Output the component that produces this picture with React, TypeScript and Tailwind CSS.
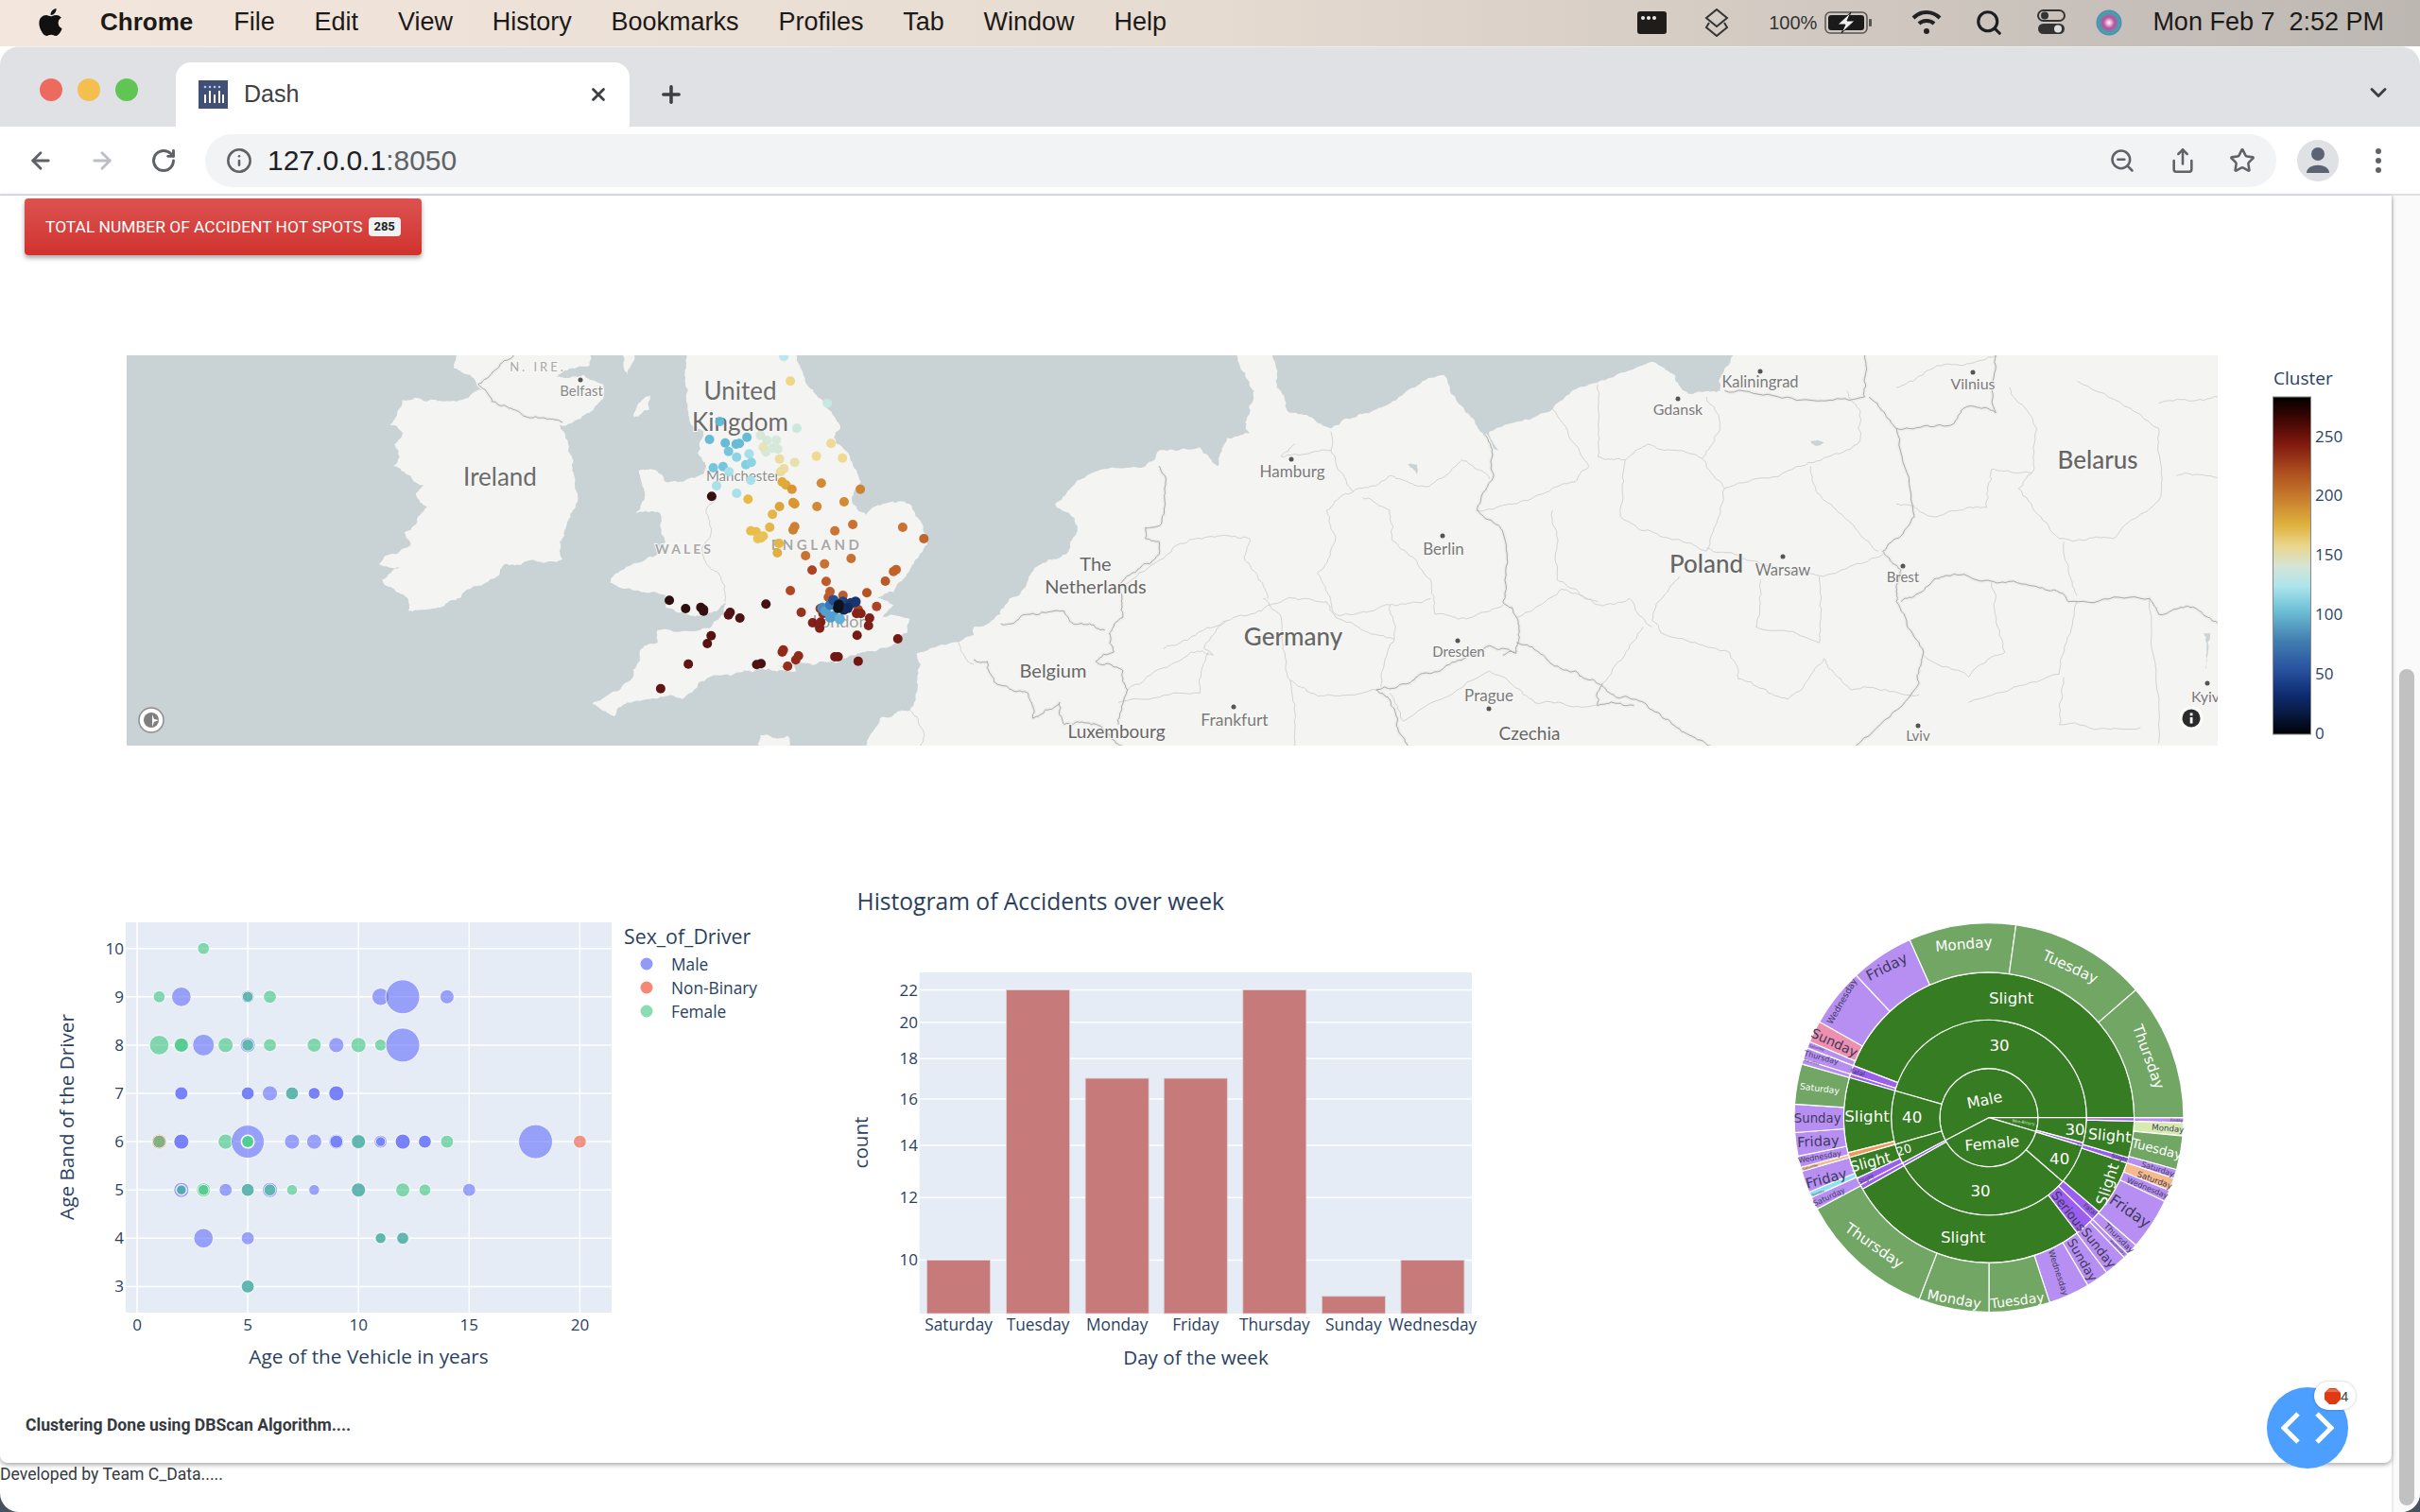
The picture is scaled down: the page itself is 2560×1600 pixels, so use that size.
import React from "react";
import { ArrowLeft, ArrowRight, RotateCw, Info, ZoomOut, Share, Star, X, Plus, ChevronDown, Search } from "lucide-react";
import { FaApple } from "react-icons/fa";

type P = number[];
const z3 = (x: number, y: number) => [130 + x / 1.742, 370 + y / 3];
const z4 = (x: number, y: number) => [1030 + x / 1.045, 370 + y / 3];
const hash = (a: number, b: number) => {
  const v = Math.sin(a * 12.9898 + b * 78.233) * 43758.5453;
  return (v - Math.floor(v)) * 2 - 1;
};
const roughSeg = (x0: number, y0: number, x1: number, y1: number, depth: number, out: number[][]) => {
  const dx = x1 - x0, dy = y1 - y0;
  const len = Math.hypot(dx, dy);
  if (depth === 0 || len < 3) {
    out.push([x1, y1]);
    return;
  }
  const amp = Math.min(len * 0.16, depth === 4 ? 3.6 : depth === 3 ? 2.4 : 1.5);
  const n = hash(x0 + x1, y0 + y1) * amp;
  const mx = (x0 + x1) / 2 - (dy / len) * n;
  const my = (y0 + y1) / 2 + (dx / len) * n;
  roughSeg(x0, y0, mx, my, depth - 1, out);
  roughSeg(mx, my, x1, y1, depth - 1, out);
};
const roughPts = (pts: number[][], depth = 4) => {
  const out: number[][] = [pts[0]];
  for (let i = 1; i < pts.length; i++) roughSeg(pts[i - 1][0], pts[i - 1][1], pts[i][0], pts[i][1], depth, out);
  return out;
};
const pairs = (pts: P, f: (x: number, y: number) => number[]) => {
  const o: number[][] = [];
  for (let i = 0; i < pts.length; i += 2) o.push(f(pts[i], pts[i + 1]));
  return o;
};
const line = (pp: number[][]) => pp.map((p, i) => (i === 0 ? "M" : "L") + p[0].toFixed(1) + " " + p[1].toFixed(1)).join(" ");
const toPath = (pts: P, f: (x: number, y: number) => number[], close = true) => {
  const pp = pairs(pts, f);
  if (close) pp.push(pp[0]);
  return line(roughPts(pp)) + (close ? " Z" : "");
};

const ireland: P = [630,-40,610,60,640,80,665,125,625,160,560,165,515,160,505,210,492,240,515,262,500,300,510,340,498,370,530,400,555,430,540,460,560,500,540,555,518,580,530,620,490,650,472,680,510,690,478,730,500,760,525,790,525,830,560,825,600,800,640,760,690,720,705,680,760,670,810,665,805,610,825,520,838,480,830,350,815,280,805,240,825,235,860,200,882,160,885,110,850,80,800,85,790,90,860,50,855,-40];
const gb: P = [1040,-40,1220,-40,1260,110,1300,190,1322,250,1310,280,1340,340,1360,420,1345,490,1370,525,1400,490,1450,490,1475,560,1482,620,1450,700,1420,770,1390,790,1420,810,1400,850,1450,855,1445,900,1420,935,1350,970,1290,990,1235,998,1240,1022,1205,1022,1190,1012,1130,1025,1080,1040,1060,1060,1030,1110,1000,1100,930,1120,905,1165,880,1140,865,1125,900,1090,940,1040,955,950,985,930,985,890,1080,885,1108,840,1112,805,1070,842,1040,840,1000,820,1000,780,960,770,898,740,920,700,985,650,1000,610,990,520,945,520,960,440,950,385,975,380,1000,420,1070,395,1075,370,1060,330,1070,260,1045,230,1040,170,1035,80];
const scot: P = [905,-40,960,-40,930,80];
const man: P = [942,215,950,170,972,145,970,190];
const contA: P = [1340,1330,1395,1170,1450,1145,1470,1000,1462,965,1568,905];
const contB: P = [0,880,20,860,35,810,55,760,75,680,105,640,115,560,90,490,125,400,190,370,205,320,250,310,270,370,280,280,305,265,300,230,310,130,295,60,285,-40,325,-40,335,120,350,200,395,250,430,205,470,150,520,80,540,180,560,260,580,320,570,260,640,190,680,110,750,38,775,80,790,140,825,130,830,60,843,-40,1600,-40,1600,1330];
const contPath = (() => {
  const pp = [...pairs(contA, z3), ...pairs(contB, z4)];
  pp.push(pp[0]);
  return line(roughPts(pp)) + " Z";
})();

const natBorders: P[] = [
  [205,370,212,430,205,560,190,565,190,600,205,610,205,650,185,690,160,760,165,850,150,900,155,960,135,990,165,1020,170,1080,160,1190],
  [0,985,15,990,25,1060,60,1090,65,1170,95,1120,100,1190,140,1195,165,1258],
  [30,870,60,840,100,830,110,870,145,890],
  [565,270,575,400,557,510,585,580,585,800,600,850,600,960,585,970],
  [445,1080,480,1060,520,1010,570,940,600,965],
  [600,930,640,1000,665,1020,690,1060,700,1085,730,1110,770,1180,815,1258],
  [990,150,1020,250,1040,530,1005,640,1025,700,1020,800,1050,960,1045,1060,975,1258],
  [830,130,915,160,985,150],
  [1020,250,1080,240,1100,180,1130,200,1130,18],
  [1025,800,1060,735,1100,720,1150,735,1200,770,1210,800,1300,790,1310,840,1350,820,1376,870],
  [445,1080,465,1140,480,1258],
  [695,1060,690,1130,730,1130],
  [985,18,985,150],
];
const regBorders: P[] = [
  [390,510,400,600,380,710,395,800,400,840,460,810,505,790],
  [430,470,460,510,465,610,505,730,510,840,545,855,585,810],
  [420,450,390,510],
  [460,810,465,920,450,1070],
  [280,860,340,800,390,800,400,850,465,920],
  [320,790,340,850,350,1050,380,1100,445,1080],
  [160,770,225,620,280,590,305,600,300,670,320,750,325,790],
  [210,950,280,860,255,950,265,970,240,960,170,1080],
  [355,300,340,340,395,320,395,260],
  [395,320,420,450,460,400,500,435,540,350,570,410],
  [640,190,680,370,665,420,600,490,555,510],
  [690,110,690,340,720,350,745,300,805,345,825,250,810,150],
  [720,350,715,530,770,600,810,640,830,440,805,345],
  [830,440,915,370,980,290,980,200,965,130],
  [925,370,935,460,965,540,1000,640],
  [810,630,870,680,940,720,1005,650],
  [640,510,645,730,690,810,725,790,750,880],
  [780,720,750,860,760,900,835,960,845,1045,900,1110,940,980],
  [870,730,865,880,935,930,935,720],
  [600,850,650,760,690,800],
  [740,880,695,1060],
  [940,980,970,1080,1045,1095],
  [1020,490,1060,530,1120,500,1125,380,1170,390,1155,440,1200,600,1260,600,1310,480,1310,250,1220,100],
  [1205,610,1220,780],
  [1330,400,1376,410],
  [1050,970,1100,1040,1140,960,1125,740],
  [1100,1120,1200,1030,1220,800],
  [1300,790,1310,1250],
  [1205,1040,1200,1190,1290,1200],
  [460,1090,475,1180,570,1020,620,1120],
  [620,1120,690,1130],
  [1020,120,1065,50,1130,20],
  [260,960,250,1090,160,1120],
  [350,1050,355,1258],
  [1145,120,1175,250,1170,390],
  [1310,170,1376,150],
];

const mapDots: [number, number, string][] = [
  [1218,22,"#b9e7ea"],[1230,100,"#f0d67f"],[1298,170,"#c7e9e6"],[1100,228,"#5fb9d6"],[1242,250,"#c8e8e0"],[1081,285,"#5fb9d6"],[1110,296,"#5fb9d6"],[1150,278,"#5fb9d6"],[1130,300,"#5fb9d6"],[1136,298,"#5fb9d6"],[1116,323,"#6fc3dc"],[1131,341,"#86d3e4"],[1154,331,"#9ddfe9"],[1148,365,"#7ccee0"],[1158,358,"#86d3e4"],[1088,375,"#6fc3dc"],[1106,371,"#6fc3dc"],[1117,388,"#a5e0ea"],[1094,432,"#a5e0ea"],[1157,415,"#a5e0ea"],[1131,456,"#a5e0ea"],
  [1175,272,"#d5e8d8"],[1187,288,"#d5e8d8"],[1204,287,"#d5e8d8"],[1185,325,"#d5e8d8"],[1197,313,"#d5e8d8"],[1207,316,"#d5e8d8"],[1180,310,"#e5e4b8"],
  [1305,298,"#eed98e"],[1278,338,"#eed98e"],[1326,344,"#eed98e"],[1210,347,"#ecdb9c"],[1238,358,"#e8dfa8"],[1218,378,"#ecdb9c"],[1212,388,"#ecdb9c"],
  [1085,466,"#2a0404"],
  [1215,420,"#dfa52f"],[1222,430,"#dfa52f"],[1233,443,"#d9922b"],[1287,424,"#d2852a"],[1359,443,"#cf7f2a"],[1152,475,"#e8b63c"],[1235,485,"#d9922b"],[1238,490,"#d9922b"],[1210,498,"#dca030"],[1279,498,"#d2852a"],[1329,483,"#d2852a"],[1197,523,"#e5b33e"],[1157,575,"#e9bb44"],[1167,578,"#e9bb44"],[1176,598,"#e9c04e"],[1170,600,"#e9c04e"],[1180,592,"#e9c04e"],[1192,564,"#e5b33e"],[1238,562,"#cf7a2a"],[1235,572,"#cf7a2a"],[1312,575,"#c9702a"],[1345,555,"#c96c28"],[1437,564,"#c96c28"],[1476,600,"#c0601f"],[1209,615,"#e5b33e"],[1206,645,"#e0ab38"],[1258,654,"#c86c26"],[1293,680,"#c96c28"],[1342,663,"#c66a26"],[1270,700,"#a83a18"],[1425,698,"#c05c20"],[1420,704,"#c05c20"],[1296,736,"#bb5420"],[1405,735,"#b9521e"],[1230,765,"#ab3e1a"],[1371,772,"#b34a1c"],[1300,786,"#b8501c"],[1303,768,"#bb5420"],[1327,780,"#bb5420"],[1389,815,"#a83c18"],
  [1285,822,"#982c14"],[1250,834,"#932814"],[1290,838,"#8c2010"],[1355,825,"#a83c18"],[1352,838,"#82170e"],[1360,838,"#82170e"],[1376,852,"#7a140e"],[1374,876,"#7a140e"],[1271,867,"#7d160e"],[1286,865,"#7d160e"],[1284,884,"#7d160e"],[1353,907,"#701009"],[1428,918,"#701009"],[1217,953,"#8c2010"],[1215,960,"#8c2010"],[1245,972,"#8c2010"],[1240,985,"#8c2010"],[1225,1005,"#8f2412"],[1318,975,"#6b0d09"],[1312,975,"#6b0d09"],[1355,989,"#6b0d09"],[1176,997,"#3d0505"],[1168,1000,"#4a0606"],[1042,998,"#5a0a07"],[991,1076,"#5a0a07"],[1077,933,"#4f0806"],[1084,908,"#4f0806"],[1119,834,"#4a0606"],[1116,842,"#4a0606"],[1137,852,"#450606"],[1185,808,"#3d0505"],[1065,818,"#2a0404"],[1070,830,"#2a0404"],[1070,825,"#2a0404"],[1037,822,"#240303"],[1007,796,"#240303"],
];
const londonDots: [number, number, string][] = [
  [510,490,"#3d86c2"],[520,500,"#4b9ccf"],[535,520,"#4b9ccf"],[545,515,"#4b9ccf"],[565,525,"#5ab0d6"],[535,480,"#2e6fb0"],[555,485,"#2e6fb0"],[545,465,"#17478f"],[575,470,"#123a7a"],[600,475,"#0d2c68"],[615,470,"#0d2c68"],[590,490,"#0a2050"],[578,495,"#0a2050"],[560,490,"#02060f"],[562,480,"#02060f"],
];
const mapLabels: [string, number, number, number, string, number?, number?][] = [
  ["United",783,414,26,"#6b6b6b"],["Kingdom",783,447,26,"#6b6b6b"],["Ireland",529,505,26,"#6b6b6b"],["N. IRE.",569,388,13,"#a8a8a8",3],["Belfast",615,414,15,"#8a8a8a"],["Manchester",786,504,15,"#8f8f8f"],["WALES",724,581,14,"#a8a8a8",3,700],["ENGLAND",864,577,15,"#a8a8a8",3.5,700],["London",889,658,18,"#a0a0a0"],
  ["The",1159,597,20,"#666666"],["Netherlands",1159,621,20,"#666666"],["Hamburg",1367,499,17,"#7a7a7a"],["Germany",1368,674,26,"#666666",0,500],["Belgium",1114,710,20,"#666666"],["Luxembourg",1181,774,19,"#666666"],["Frankfurt",1306,762,17.5,"#7a7a7a"],["Dresden",1543,690,15,"#7a7a7a"],["Prague",1575,736,17,"#7a7a7a"],["Czechia",1618,776,19,"#666666"],["Berlin",1527,581,17,"#7a7a7a"],["Poland",1805,597,26,"#666666",0,500],["Warsaw",1886,603,16.5,"#7a7a7a"],["Brest",2013,611,15,"#7a7a7a"],["Lviv",2029,779,15,"#7a7a7a"],["Kyiv",2333,737,16,"#7a7a7a"],["Gdansk",1775,433,16,"#7a7a7a"],["Kaliningrad",1862,404,16.5,"#7a7a7a"],["Vilnius",2087,406,16,"#7a7a7a"],["Belarus",2219,487,26,"#666666",0,500],
];
const mapCities = [[614,402],[1366,486],[1305,748],[1542,678],[1575,750],[1526,567],[1886,589],[2013,599],[2029,768],[2335,723],[1775,422],[1862,393],[2087,394]];

function MapSvg() {
  return (
    <svg width={2212} height={413} viewBox="134 376 2212 413" className="block bg-[#c9d2d4] shrink-0">
      <g fill="#f4f4f2">
        <path d={toPath(ireland, z3)} />
        <path d={toPath(gb, z3)} />
        <path d={toPath(scot, z3)} />
        <path d={toPath(man, z3)} />
        <path d={contPath} />
        <path d={toPath([1175,1330,1175,1225,1205,1235,1225,1225,1230,1330], z3)} />
      </g>
      <g fill="#c9d2d4">
        <path d={toPath([1205,1005,1240,1000,1225,1012], z3)} />
        <path d={toPath([925,290,940,295,930,305], z4)} />
        <path d={toPath([480,365,490,365,490,395], z4)} />
        <path d={toPath([1360,900,1367,900,1362,1015], z4)} />
      </g>
      <g fill="none" strokeLinejoin="round">
        <g stroke="#ededeb" strokeWidth={4}>
          {natBorders.map((b, i) => <path key={i} d={toPath(b, z4, false)} />)}
          <path d={toPath([720,18,690,60,655,110,680,165,735,205,785,220,810,230], z3, false)} />
        </g>
        <g stroke="#d2d2d0" strokeWidth={1}>
          {regBorders.map((b, i) => <path key={i} d={toPath(b, z4, false)} />)}
          <path d={toPath([1095,470,1075,520,1085,570,1070,620,1075,680,1110,750,1110,800], z3, false)} />
          <path d={toPath([1540,915,1550,970,1568,1000], z3, false)} />
          <path d={toPath([1450,1145,1475,1210,1470,1258], z3, false)} />
        </g>
        <g stroke="#a9a9a7" strokeWidth={1}>
          {natBorders.map((b, i) => <path key={i} d={toPath(b, z4, false)} />)}
          <path d={toPath([720,18,690,60,655,110,680,165,735,205,785,220,810,230], z3, false)} />
        </g>
      </g>
      <g fontFamily="Lato, 'Open Sans', sans-serif" textAnchor="middle" stroke="#f8f8f6" strokeWidth={2} style={{ paintOrder: "stroke" }}>
        {mapLabels.map(([t, x, y, s, c, ls, w]) => (
          <text key={t} x={x} y={y + s * 0.35} fontSize={s} fill={c} letterSpacing={ls || 0} fontWeight={w || 400}>{t}</text>
        ))}
      </g>
      <g fill="#555555">
        {mapCities.map(([x, y], i) => <circle key={i} cx={x} cy={y} r={2.5} />)}
      </g>
      <g opacity={0.95}>
        {mapDots.map(([x, y, c], i) => {
          const [a, b] = z3(x, y);
          return <circle key={i} cx={a} cy={b} r={5} fill={c} />;
        })}
        {londonDots.map(([x, y, c], i) => <circle key={i} cx={700 + x / 3} cy={480 + y / 3} r={5.5} fill={c} />)}
      </g>
      <g>
        <ellipse cx={160} cy={762} rx={13} ry={13} fill="#ffffff" stroke="#8d8d8d" strokeWidth={1.5} />
        <circle cx={160} cy={762} r={8} fill="#7f7f7f" />
        <path d="M161 756 L163 761 L168 762 L163 764 L161 769 Z" fill="#ffffff" />
        <circle cx={2318} cy={760} r={13} fill="#ffffff" opacity={0.6} />
        <circle cx={2318} cy={760} r={9.5} fill="#2b2b2b" />
        <rect x={2316.7} y={759} width={2.8} height={6.5} fill="#ffffff" />
        <rect x={2316.7} y={754.5} width={2.8} height={2.8} fill="#ffffff" />
      </g>
    </svg>
  );
}

function Colorbar() {
  const ticks: [string, number][] = [["250",462],["200",524],["150",587],["100",650],["50",713],["0",776]];
  return (
    <svg width={183} height={413} viewBox="2347 376 183 413" className="block ml-[1px] shrink-0">
      <defs>
        <linearGradient id="cb" x1="0" y1="1" x2="0" y2="0">
          <stop offset="0" stopColor="#000005" />
          <stop offset="0.06" stopColor="#071a40" />
          <stop offset="0.12" stopColor="#0f2d73" />
          <stop offset="0.19" stopColor="#28519f" />
          <stop offset="0.28" stopColor="#4280b0" />
          <stop offset="0.37" stopColor="#70c1d8" />
          <stop offset="0.44" stopColor="#aee5ec" />
          <stop offset="0.5" stopColor="#d6e4d6" />
          <stop offset="0.56" stopColor="#ead58a" />
          <stop offset="0.62" stopColor="#dfb23e" />
          <stop offset="0.7" stopColor="#c87d2e" />
          <stop offset="0.78" stopColor="#ac4c1e" />
          <stop offset="0.86" stopColor="#80190f" />
          <stop offset="0.94" stopColor="#3a0502" />
          <stop offset="1" stopColor="#000000" />
        </linearGradient>
      </defs>
      <rect x={2404.5} y={420} width={40} height={357} fill="url(#cb)" stroke="#888888" strokeWidth={1} />
      <g fontFamily="'Open Sans', sans-serif" fill="#2a3f5f">
        <text x={2405} y={407} fontSize={19}>Cluster</text>
        {ticks.map(([t, y]) => <text key={t} x={2449} y={y + 6} fontSize={17}>{t}</text>)}
      </g>
    </svg>
  );
}

const M = "#636efa", F = "#3cc47f", N = "#ef553b";
const bubbles: [number, number, number, string][] = [
  [3,10,5.5,F],[1,9,5.5,F],[2,9,9,M],[5,9,6,M],[5,9,5,F],[6,9,6,F],[11,9,8,M],[12,9,18,M],[14,9,6.5,M],
  [1,8,9,F],[2,8,7,F],[2,8,6.5,F],[3,8,10,M],[4,8,7,F],[5,8,7,M],[5,8,5.5,F],[6,8,6,F],[8,8,6.5,F],[9,8,7,M],[10,8,7,F],[11,8,5.5,F],[12,8,18,M],
  [2,7,6.5,M],[2,7,6,M],[5,7,6,M],[5,7,6,M],[6,7,7,M],[7,7,6,M],[7,7,6,F],[8,7,5.5,M],[8,7,5.5,M],[9,7,7,M],[9,7,7,M],
  [1,6,7,N],[1,6,6,F],[2,6,7,M],[2,6,7,M],[4,6,7,F],[5,6,17.5,M],[7,6,7,M],[8,6,7,M],[9,6,7,M],[9,6,6,M],[10,6,7,M],[10,6,6.5,F],[11,6,6,M],[11,6,4.5,M],[12,6,7,M],[12,6,7,M],[13,6,6,M],[13,6,6,M],[14,6,6,F],[18,6,18,M],[20,6,6,N],
  [2,5,7,M],[2,5,5,M],[2,5,4.5,F],[3,5,6.5,F],[3,5,5,F],[4,5,6,M],[5,5,6,M],[5,5,6,F],[6,5,7,M],[6,5,5.5,F],[7,5,5,F],[8,5,5,M],[10,5,7,M],[10,5,6.5,F],[12,5,6.5,F],[13,5,5.5,F],[15,5,6,M],
  [3,4,9,M],[5,4,6,M],[11,4,5,M],[11,4,5,F],[12,4,6,M],[12,4,5.5,F],
  [5,3,6,M],[5,3,6,F],
];

function Scatter() {
  const X = (v: number) => 145 + v * 23.42;
  const Y = (v: number) => 1003.7 + (10 - v) * 51.1;
  return (
    <svg width={840} height={540} viewBox="40 930 840 540" className="block shrink-0">
      <rect x={133} y={976} width={514} height={413} fill="#e5ecf6" />
      <g stroke="#ffffff" strokeWidth={1.5}>
        {[0,5,10,15,20].map((v) => <line key={v} x1={X(v)} x2={X(v)} y1={976} y2={1389} />)}
        {[3,4,5,6,7,8,9,10].map((v) => <line key={v} x1={133} x2={647} y1={Y(v)} y2={Y(v)} />)}
      </g>
      {bubbles.map(([x, y, r, c], i) => (
        <circle key={i} cx={X(x)} cy={Y(y)} r={r < 12 ? r * 1.15 : r} fill={c} fillOpacity={0.6} stroke="#ffffff" strokeWidth={0.8} />
      ))}
      <circle cx={X(5)} cy={Y(6)} r={7.5} fill="#ffffff" />
      <circle cx={X(5)} cy={Y(6)} r={6} fill="#4fcf95" />
      <g fontFamily="'Open Sans', sans-serif" fill="#2a3f5f">
        {[0,5,10,15,20].map((v) => <text key={v} x={X(v)} y={1408} fontSize={17} textAnchor="middle">{v}</text>)}
        {[3,4,5,6,7,8,9,10].map((v) => <text key={v} x={131} y={Y(v) + 6} fontSize={17} textAnchor="end">{v}</text>)}
        <text x={390} y={1443} fontSize={20.8} textAnchor="middle">Age of the Vehicle in years</text>
        <text x={0} y={0} fontSize={20.7} textAnchor="middle" transform="translate(78 1182) rotate(-90)">Age Band of the Driver</text>
        <text x={660} y={999} fontSize={21.3}>Sex_of_Driver</text>
        <circle cx={684} cy={1020} r={6.5} fill={M} fillOpacity={0.7} />
        <circle cx={684} cy={1045} r={6.5} fill={N} fillOpacity={0.7} />
        <circle cx={684} cy={1070} r={6.5} fill={F} fillOpacity={0.6} />
        <text x={710} y={1027} fontSize={17.3}>Male</text>
        <text x={710} y={1052} fontSize={17.3}>Non-Binary</text>
        <text x={710} y={1077} fontSize={17.3}>Female</text>
      </g>
    </svg>
  );
}

function Bars() {
  const X = (z: number) => 880 + z / 2.178;
  const Y = (z: number) => 930 + z / 2.9;
  const bars: [string, number, number][] = [["Saturday",219,1170],["Tuesday",402,341],["Monday",584,612],["Friday",765,612],["Thursday",947,341],["Sunday",1129,1281],["Wednesday",1311,1170]];
  const ticks: [number, number][] = [[22,341],[20,440],[18,552],[16,676],[14,818],[12,978],[10,1170]];
  return (
    <svg width={720} height={540} viewBox="880 930 720 540" className="block shrink-0">
      <rect x={972.7} y={1029} width={584.3} height={361} fill="#e5ecf6" />
      <g stroke="#ffffff" strokeWidth={1.5}>
        {ticks.map(([v, z]) => <line key={v} x1={972.7} x2={1557} y1={Y(z)} y2={Y(z)} />)}
      </g>
      {bars.map(([n, x, t]) => (
        <rect key={n} x={X(x)} y={Y(t)} width={146 / 2.178} height={Y(1334) - Y(t)} fill="#c67b7a" stroke="#dcd0d8" strokeWidth={0.8} />
      ))}
      <g fontFamily="'Open Sans', sans-serif" fill="#2a3f5f">
        <text x={906.5} y={963} fontSize={24.6}>Histogram of Accidents over week</text>
        {ticks.map(([v, z]) => <text key={v} x={971} y={Y(z) + 6} fontSize={17} textAnchor="end">{v}</text>)}
        {bars.map(([n, x]) => <text key={n} x={X(x + 73)} y={1408} fontSize={17.3} textAnchor="middle">{n}</text>)}
        <text x={1265} y={1444} fontSize={20.6} textAnchor="middle">Day of the week</text>
        <text x={0} y={0} fontSize={20.6} textAnchor="middle" transform="translate(918 1209) rotate(-90)">count</text>
      </g>
    </svg>
  );
}

const CX = 672, CY = 668;
const R = [0, 156, 310, 461, 618];
const wedge = (ring: number, a0: number, a1: number) => {
  const ri = R[ring], ro = R[ring + 1];
  const p = (r: number, a: number) => {
    const t = (a * Math.PI) / 180;
    return `${(CX + r * Math.cos(t)).toFixed(1)} ${(CY + r * Math.sin(t)).toFixed(1)}`;
  };
  const large = a1 - a0 > 180 ? 1 : 0;
  if (ri === 0) return `M${CX} ${CY} L${p(ro, a0)} A${ro} ${ro} 0 ${large} 1 ${p(ro, a1)} Z`;
  return `M${p(ri, a0)} L${p(ro, a0)} A${ro} ${ro} 0 ${large} 1 ${p(ro, a1)} L${p(ri, a1)} A${ri} ${ri} 0 ${large} 0 ${p(ri, a0)} Z`;
};
const DG = "#367c22", LG = "#72a665", DP = "#9b5ff0", LP = "#b78ff3", PK = "#ee8fb0", OR = "#f6b98a", CY2 = "#8fe0f5", LM = "#d5ebb0", DO = "#ef9a5a";
const sectors: [number, number, number, string][] = [
  [0,152.3,360,DG],[0,0,16.6,DG],[0,16.6,152.3,DG],
  [1,196,360,DG],[1,164,196,DG],[1,152.3,164,DG],[1,0,15,DG],[1,15,17,DP],[1,17,41,DG],[1,41,150.5,DG],[1,150.5,152.3,DP],
  [2,201,360,DG],[2,197.5,201,DP],[2,196,197.5,DP],[2,166,196,DG],[2,164,166,DO],[2,155.3,164,DG],[2,152.3,155.3,DP],[2,52.5,150.5,DG],[2,150.5,152.3,DP],[2,44.5,52.5,DP],[2,40.5,44.5,DP],[2,18.2,40.5,DG],[2,16,18.2,DP],[2,1.4,16,DG],[2,0,1.4,DP],
  [3,0,1.5,LP],[3,1.5,5.4,LM],[3,5.4,15.5,LG],[3,15.5,18.2,LP],[3,18.2,22,OR],[3,22,25.5,LP],[3,25.5,41,LP],[3,41,44.5,LP],[3,44.5,46,LP],[3,46,52.8,LP],[3,52.8,59.5,LP],[3,59.5,71.8,LP],[3,71.8,90,LG],[3,90,111,LG],[3,111,152,LG],[3,152,155.8,LP],[3,155.8,157.5,CY2],[3,157.5,164,LP],[3,164,165.2,OR],[3,165.2,168.6,LP],[3,168.6,175.6,LP],[3,175.6,184,LP],[3,184,196,LG],[3,196,197.5,LP],[3,197.5,201,LP],[3,201,203,LP],[3,203,209.5,PK],[3,209.5,227,LP],[3,227,246,LP],[3,246,278,LG],[3,278,319,LG],[3,319,360,LG],
];
const W = "#ffffff", D = "#3f3a5c";
const sunLabels: [string, number, number, number, number, string][] = [
  ["Male",658,612,48,-12,W],["Female",682,750,48,-5,W],["Non-Binary",782,683,13,9,"#dbe8d2"],
  ["30",705,438,50,0,W],["40",428,668,50,0,W],["20",402,770,38,-18,W],["30",945,705,50,0,W],["40",896,798,50,0,W],["30",645,900,50,0,W],["10",958,757,14,15,D],
  ["Slight",743,290,50,0,W],["Slight",285,663,50,0,W],["Slight",296,810,46,-15,W],["Slight",1055,725,48,5,W],["Slight",1048,880,48,-72,W],["Slight",590,1048,50,0,W],["Serious",925,965,40,52,D],["Fatal",255,525,20,15,D],["Fatal",992,960,20,40,D],["Slight",282,862,18,-25,D],["Slight",1088,797,20,18,D],
  ["Monday",592,118,46,-5,W],["Tuesday",930,190,46,25,W],["Thursday",1178,475,46,70,W],["Friday",348,190,46,-27,D],["Wednesday",205,298,28,-60,D],["Sunday",182,430,42,25,D],["Saturday",135,575,28,7,W],["Sunday",128,670,40,0,D],["Friday",130,742,44,-3,D],["Wednesday",135,793,24,-10,D],["Friday",155,860,44,-15,D],["Saturday",165,920,24,-25,D],["Thursday",140,478,24,15,D],["Saturday",126,447,11,15,D],["Saturday",110,492,11,15,D],["Saturday",105,826,11,-18,D],["Tuesday",130,908,10,-22,D],
  ["Monday",1240,702,26,5,D],["Tuesday",1205,768,40,14,W],["Saturday",1208,832,24,18,D],["Saturday",1198,866,26,20,D],["Wednesday",1175,892,24,22,D],["Friday",1120,965,48,35,D],["Thursday",1085,1050,26,45,D],["Wednesday",1080,1080,11,45,D],["Sunday",1020,1082,40,52,D],["Sunday",968,1120,40,60,D],["Wednesday",892,1160,26,72,D],["Tuesday",762,1248,42,-7,W],["Monday",562,1243,44,10,W],["Thursday",308,1075,46,35,W],["Friday",1268,677,13,0,D],
];

function Sunburst() {
  return (
    <svg width={460} height={460} viewBox="0 0 1380 1380" className="block shrink-0">
      {sectors.map(([r, a, b, c], i) => (
        <path key={i} d={wedge(r, a, b)} fill={c} stroke="#ffffff" strokeWidth={3.5} strokeLinejoin="round" />
      ))}
      <g fontFamily="'DejaVu Sans', sans-serif" textAnchor="middle" dominantBaseline="central">
        {sunLabels.map(([t, x, y, s, r, c], i) => (
          <text key={i} x={0} y={0} fontSize={s} fill={c} transform={`translate(${x} ${y}) rotate(${r})`}>{t}</text>
        ))}
      </g>
    </svg>
  );
}

function Menu() {
  const items = ["File", "Edit", "View", "History", "Bookmarks", "Profiles", "Tab", "Window", "Help"];
  return (
    <div className="h-[49px] shrink-0 pb-[2px] flex items-center bg-gradient-to-r from-[#f3e7dd] via-[#e6dbd1] to-[#bdb7b2] text-[#1c1a18] text-[27px] font-['Liberation_Sans',sans-serif]">
      <FaApple className="ml-[38px] w-[31px] h-[33px] text-[#111111]" />
      <span className="ml-[37px] font-bold text-[26px]">Chrome</span>
      <div className="ml-[43px] flex gap-[41.8px]">
        {items.map((t) => <span key={t}>{t}</span>)}
      </div>
      <div className="ml-auto flex items-center">
        <svg width={31} height={24} viewBox="0 0 31 24">
          <rect width={31} height={24} rx={3} fill="#1f1c1a" />
          <circle cx={6} cy={7} r={2} fill="#eeeeee" /><circle cx={12} cy={7} r={2} fill="#eeeeee" /><circle cx={18} cy={7} r={2} fill="#eeeeee" />
        </svg>
        <svg className="ml-[40px]" width={26} height={30} viewBox="0 0 26 30" fill="none" stroke="#333333" strokeWidth={2}>
          <path d="M13 1 L24 10 L13 19 L2 10 Z" />
          <path d="M5 15 L2 20 L13 29 L24 20 L21 15" />
        </svg>
        <span className="ml-[42px] text-[20px] text-[#333333]">100%</span>
        <svg className="ml-[8px]" width={51} height={24} viewBox="0 0 51 24">
          <rect x={1} y={1} width={44} height={22} rx={5} fill="none" stroke="#555555" strokeWidth={1.5} />
          <rect x={4} y={4} width={38} height={16} rx={3} fill="#1a1a1a" />
          <rect x={47} y={8} width={3} height={8} rx={1} fill="#555555" />
          <path d="M28 1 L14 14 H22 L18 23 L32 10 H24 Z" fill="#f0f0f0" stroke="#1a1a1a" strokeWidth={1} />
        </svg>
        <svg className="ml-[40px]" width={34} height={27} viewBox="0 0 34 27" fill="none" stroke="#222222" strokeWidth={4}>
          <path d="M3 9 C11 1 23 1 31 9" /><path d="M9 15 C13 11 21 11 25 15" />
          <circle cx={17} cy={23} r={3} fill="#222222" stroke="none" />
        </svg>
        <Search className="ml-[34px] w-[30px] h-[30px] text-[#1e1e1e]" strokeWidth={2.5} />
        <svg className="ml-[36px]" width={30} height={27} viewBox="0 0 30 27">
          <rect x={1} y={1} width={28} height={11} rx={5.5} fill="none" stroke="#333333" strokeWidth={2} />
          <circle cx={8} cy={6.5} r={4} fill="#333333" />
          <rect x={1} y={15} width={28} height={11} rx={5.5} fill="#333333" />
          <circle cx={22} cy={20.5} r={4} fill="#dddddd" />
        </svg>
        <svg className="ml-[32px]" width={28} height={28} viewBox="0 0 28 28">
          <defs>
            <radialGradient id="siri" cx="0.5" cy="0.5" r="0.55">
              <stop offset="0" stopColor="#ffffff" /><stop offset="0.4" stopColor="#c04da0" /><stop offset="0.75" stopColor="#3fa7a8" /><stop offset="1" stopColor="#5d6fc9" />
            </radialGradient>
          </defs>
          <circle cx={14} cy={14} r={13.5} fill="url(#siri)" />
        </svg>
        <span className="ml-[32px] mr-[38px] whitespace-pre">Mon Feb 7  2:52 PM</span>
      </div>
    </div>
  );
}

function Chrome() {
  return (
    <>
      <div className="h-[85px] shrink-0 bg-[#dfe1e5] rounded-t-[20px] border-t border-[#eceded] flex items-end relative font-['Liberation_Sans',sans-serif]">
        <div className="flex gap-[16px] ml-[42px] mb-[27px]">
          <span className="w-[24px] h-[24px] rounded-full bg-[#ec6a5e]" />
          <span className="w-[24px] h-[24px] rounded-full bg-[#f4bf4f]" />
          <span className="w-[24px] h-[24px] rounded-full bg-[#61c554]" />
        </div>
        <div className="ml-[40px] w-[480px] h-[68px] bg-white rounded-t-[16px] flex items-center">
          <svg className="ml-[24px]" width={31} height={30} viewBox="0 0 31 30">
            <rect width={31} height={30} fill="#3f4f75" />
            <g stroke="#ffffff" strokeWidth={2}>
              <path d="M7 15 V24 M12 11 V24 M17 15 V24 M22 11 V24 M26 15 V24" />
            </g>
            <g fill="#b9c6dc"><circle cx={7} cy={7} r={1.3} /><circle cx={12} cy={7} r={1.3} /><circle cx={17} cy={7} r={1.3} /><circle cx={22} cy={7} r={1.3} /></g>
          </svg>
          <span className="ml-[17px] text-[25px] text-[#3c4043]">Dash</span>
          <X className="ml-auto mr-[22px] w-[22px] h-[22px] text-[#3c4043]" strokeWidth={3} />
        </div>
        <Plus className="ml-[30px] mb-[20px] w-[28px] h-[28px] text-[#3c4043]" strokeWidth={3} />
        <ChevronDown className="ml-auto mr-[30px] mb-[22px] w-[28px] h-[28px] text-[#3c4043]" strokeWidth={2.5} />
      </div>
      <div className="h-[73px] shrink-0 bg-white border-b-2 border-[#dee1e6] flex items-center font-['Liberation_Sans',sans-serif]">
        <ArrowLeft className="ml-[29px] w-[28px] h-[28px] text-[#5f6368]" strokeWidth={2.5} />
        <ArrowRight className="ml-[37px] w-[28px] h-[28px] text-[#bcbfc4]" strokeWidth={2.5} />
        <RotateCw className="ml-[37px] w-[28px] h-[28px] text-[#5f6368]" strokeWidth={2.5} />
        <div className="ml-[30px] w-[2191px] h-[56px] rounded-full bg-[#f1f3f4] flex items-center">
          <Info className="ml-[22px] w-[28px] h-[28px] text-[#5f6368]" strokeWidth={2.2} />
          <span className="ml-[16px] text-[30px] text-[#202124]">127.0.0.1<span className="text-[#5f6368]">:8050</span></span>
          <ZoomOut className="ml-auto w-[28px] h-[28px] text-[#5f6368]" strokeWidth={2.2} />
          <Share className="ml-[36px] w-[28px] h-[30px] text-[#5f6368]" strokeWidth={2.2} />
          <Star className="ml-[35px] w-[28px] h-[28px] text-[#5f6368]" strokeWidth={2.2} />
          <span className="w-[22px]" />
        </div>
        <div className="ml-[22px] w-[44px] h-[44px] rounded-full bg-[#dfe1e5] flex items-center justify-center">
          <svg width={26} height={30} viewBox="0 0 26 30" fill="#5a6473">
            <circle cx={13} cy={8} r={7} />
            <path d="M1 28 C1 17 25 17 25 28 Z" />
          </svg>
        </div>
        <svg className="ml-[38px]" width={8} height={28} viewBox="0 0 8 28" fill="#5f6368">
          <circle cx={4} cy={4} r={3} /><circle cx={4} cy={14} r={3} /><circle cx={4} cy={24} r={3} />
        </svg>
      </div>
    </>
  );
}

export default function App() {
  return (
    <div className="w-[2560px] h-[1600px] overflow-hidden flex flex-col bg-[#47535c]">
      <Menu />
      <div className="flex-1 flex flex-col rounded-b-[20px] overflow-hidden bg-white min-h-0">
        <Chrome />
        <div className="flex-1 flex min-h-0">
          <div className="w-[2530px] shrink-0 flex flex-col">
            <div className="h-[1341px] shrink-0 relative bg-white rounded-b-[8px] shadow-[0_2px_5px_rgba(0,0,0,0.35)] flex flex-col">
              <div className="mt-[3px] ml-[26px] w-[420px] h-[60px] rounded-[4px] bg-gradient-to-b from-[#db5250] to-[#d1322d] shadow-[0_3px_5px_rgba(0,0,0,0.35)] flex items-center font-['Roboto',sans-serif]">
                <span className="ml-[22px] text-[17.4px] text-white whitespace-nowrap">TOTAL NUMBER OF ACCIDENT HOT SPOTS</span>
                <span className="ml-[6px] w-[34px] h-[20px] rounded-[4px] bg-[#f1f1f1] text-[#212529] text-[13px] font-bold flex items-center justify-center">285</span>
              </div>
              <div className="mt-[106px] ml-[134px] flex">
                <MapSvg />
                <Colorbar />
              </div>
              <div className="mt-[141px] ml-[40px] flex">
                <Scatter />
                <Bars />
                <div className="ml-[280px] mt-[30px]"><Sunburst /></div>
              </div>
              <p className="mt-[26px] ml-[27px] text-[17.6px] leading-[24px] font-bold text-[#343a40] font-['Roboto',sans-serif]">Clustering Done using DBScan Algorithm....</p>
              <div className="absolute left-[2398px] top-[1261px] w-[86px] h-[86px] rounded-full bg-[#4c9ffe] flex items-center justify-center">
                <svg width={56} height={34} viewBox="0 0 56 34" fill="none" stroke="#ffffff" strokeWidth={5}>
                  <path d="M18 2 L3 17 L18 32" />
                  <path d="M38 2 L53 17 L38 32" />
                </svg>
              </div>
              <div className="absolute left-[2448px] top-[1255px] w-[44px] h-[30px] rounded-full bg-white shadow-[0_0_3px_rgba(0,0,0,0.25)] flex items-center">
                <svg className="ml-[11px]" width={17} height={17} viewBox="0 0 17 17">
                  <path d="M5 0 H12 L17 5 V12 L12 17 H5 L0 12 V5 Z" fill="#e03a12" />
                  <path d="M5 1 H12 L15 4 H2 Z" fill="#f26a4a" />
                </svg>
                <span className="text-[15px] leading-none text-[#444444] font-['Liberation_Sans',sans-serif]">4</span>
              </div>
            </div>
            <p className="mt-[1px] text-[17.6px] leading-[22px] text-[#343a40] font-['Roboto',sans-serif]">Developed by Team C_Data.....</p>
          </div>
          <div className="flex-1 bg-[#fafafa] border-l-2 border-[#ececec] flex flex-col">
            <div className="mt-[501px] ml-[6px] w-[16px] h-[885px] rounded-full bg-[#c1c1c1]" />
          </div>
        </div>
      </div>
    </div>
  );
}
